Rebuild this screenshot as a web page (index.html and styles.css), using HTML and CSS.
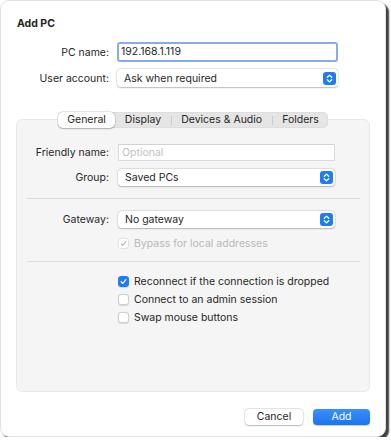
FILE: index.html
```html
<!DOCTYPE html>
<html>
<head>
<meta charset="utf-8">
<link rel="stylesheet" href="styles.css">
</head>
<body>
<div class="window">
  <div class="title">Add PC</div>
  <div class="form top">
    <span class="lbl">PC name:</span>
    <div class="field focus">192.168.1.119</div>
    <span class="lbl">User account:</span>
    <div class="select"><span>Ask when required</span><svg class="stepper" viewBox="0 0 13 13" width="13" height="13"><rect width="13" height="13" rx="3" fill="#1f7cf5"/><path d="M4.3 5.3 6.5 3.1 8.7 5.3M4.3 7.7 6.5 9.9 8.7 7.7" fill="none" stroke="#fff" stroke-width="1.3" stroke-linecap="round" stroke-linejoin="round"/></svg></div>
  </div>

  <div class="tabs">
    <div class="tab active">General</div>
    <div class="tab">Display</div>
    <div class="tsep"></div>
    <div class="tab">Devices &amp; Audio</div>
    <div class="tsep"></div>
    <div class="tab">Folders</div>
  </div>

  <div class="panel">
    <div class="form inner first">
      <span class="lbl">Friendly name:</span>
      <div class="field placeholder">Optional</div>
      <span class="lbl">Group:</span>
      <div class="select"><span>Saved PCs</span><svg class="stepper" viewBox="0 0 13 13" width="13" height="13"><rect width="13" height="13" rx="3" fill="#1f7cf5"/><path d="M4.3 5.3 6.5 3.1 8.7 5.3M4.3 7.7 6.5 9.9 8.7 7.7" fill="none" stroke="#fff" stroke-width="1.3" stroke-linecap="round" stroke-linejoin="round"/></svg></div>
    </div>
    <div class="sep sep1"></div>
    <div class="form inner gw">
      <span class="lbl">Gateway:</span>
      <div class="select"><span>No gateway</span><svg class="stepper" viewBox="0 0 13 13" width="13" height="13"><rect width="13" height="13" rx="3" fill="#1f7cf5"/><path d="M4.3 5.3 6.5 3.1 8.7 5.3M4.3 7.7 6.5 9.9 8.7 7.7" fill="none" stroke="#fff" stroke-width="1.3" stroke-linecap="round" stroke-linejoin="round"/></svg></div>
      <span></span>
      <div class="check disabled"><span class="box"><svg viewBox="0 0 11 11" width="11" height="11"><path d="M2.6 5.8 4.6 7.9 8.5 3.2" fill="none" stroke="#bdbdbd" stroke-width="1.4" stroke-linecap="round" stroke-linejoin="round"/></svg></span>Bypass for local addresses</div>
    </div>
    <div class="sep sep2"></div>
    <div class="checks">
      <div class="check"><span class="box on"><svg viewBox="0 0 11 11" width="11" height="11"><path d="M2.6 5.8 4.6 7.9 8.5 3.2" fill="none" stroke="#fff" stroke-width="1.5" stroke-linecap="round" stroke-linejoin="round"/></svg></span>Reconnect if the connection is dropped</div>
      <div class="check"><span class="box"></span>Connect to an admin session</div>
      <div class="check"><span class="box"></span>Swap mouse buttons</div>
    </div>
  </div>

  <div class="footer">
    <div class="btn">Cancel</div>
    <div class="btn primary">Add</div>
  </div>
</div>
</body>
</html>
```

FILE: styles.css
```css
html, body {
  margin: 0;
  padding: 0;
  background: #ffffff;
}

body {
  font-family: Inter, "Liberation Sans", sans-serif;
  font-size: 10.5px;
  line-height: 13px;
  color: #262626;
}

.window {
  width: 386px;
  height: 437px;
  box-sizing: border-box;
  background: #ffffff;
  border-radius: 9px;
  border: 1px solid #e2e2e2;
  box-shadow: 3px 3px 1.5px rgba(30, 30, 30, 0.85);
  padding: 16px 15px 0 15px;
  display: flex;
  flex-direction: column;
}

.title {
  font-weight: 700;
  font-size: 10.5px;
  line-height: 13px;
  padding-left: 1px;
  color: #1e1e1e;
}

.form {
  display: grid;
  align-items: center;
}

.form.top {
  margin-top: 12px;
  grid-template-columns: 93px 221px;
  column-gap: 8px;
  row-gap: 7px;
}

.lbl {
  text-align: right;
  white-space: nowrap;
}

.field {
  box-sizing: border-box;
  background: #ffffff;
  border: 1px solid #dcdcdc;
  border-top-color: #d2d2d2;
  height: 17px;
  line-height: 15px;
  padding-left: 3px;
}

.field.focus {
  height: 20px;
  line-height: 16px;
  border: 2px solid #86acee;
  border-radius: 3px;
  padding-left: 2px;
}

.field.placeholder {
  color: #c2c2c2;
}

.select {
  box-sizing: border-box;
  height: 18px;
  background: #ffffff;
  border-radius: 4px;
  box-shadow: 0 0 0 0.5px rgba(0, 0, 0, 0.12), 0 0.5px 1.5px rgba(0, 0, 0, 0.22);
  display: flex;
  align-items: center;
  justify-content: space-between;
  padding: 0 2px 0 7px;
}

.stepper {
  display: block;
}

.tabs {
  margin: 25px auto 0;
  display: flex;
  align-items: center;
  height: 16px;
  background: #e5e5e5;
  border-radius: 5px;
  box-shadow: inset 0 0 0 0.5px rgba(0, 0, 0, 0.06);
  position: relative;
  z-index: 1;
}

.tab {
  padding: 0 9.5px;
  height: 16px;
  line-height: 16px;
  white-space: nowrap;
  color: #262626;
}

.tab.active {
  background: #ffffff;
  border-radius: 5px;
  box-shadow: 0 0 0 0.5px rgba(0, 0, 0, 0.12), 0 0.5px 1.5px rgba(0, 0, 0, 0.25);
}

.tsep {
  width: 1px;
  height: 9px;
  background: #cbcbcb;
}

.panel {
  margin-top: -9px;
  height: 273px;
  box-sizing: border-box;
  background: #f5f5f5;
  border: 1px solid #e8e8e8;
  border-radius: 6px;
  padding-top: 24px;
}

.form.inner {
  grid-template-columns: 92px 217px;
  column-gap: 9px;
}

.form.first {
  row-gap: 8px;
}

.form.first .select {
  height: 17px;
}

.form.gw .select {
  height: 17px;
}

.form.gw {
  row-gap: 6px;
}

.sep {
  height: 1px;
  background: #dddddd;
  margin-left: 10px;
  margin-right: 9px;
}

.sep1 {
  margin-top: 12px;
  margin-bottom: 12px;
}

.sep2 {
  margin-top: 9px;
  margin-bottom: 10px;
}

.check {
  display: flex;
  align-items: center;
  height: 18px;
  white-space: nowrap;
}

.check.disabled {
  color: #b9b9b9;
}

.checks {
  padding-left: 101px;
}

.box {
  width: 11px;
  height: 11px;
  box-sizing: border-box;
  border-radius: 3px;
  background: #ffffff;
  border: 0.5px solid #cfcfcf;
  box-shadow: 0 0.5px 1px rgba(0, 0, 0, 0.12);
  margin-right: 5px;
  display: flex;
  align-items: center;
  justify-content: center;
  flex: none;
}

.box svg {
  display: block;
}

.check.disabled .box {
  border-color: #e2e2e2;
  box-shadow: none;
}

.box.on {
  background: #1f7cf5;
  border-color: #1f7cf5;
}

.footer {
  display: flex;
  justify-content: flex-end;
  gap: 10px;
  margin-top: 17px;
  padding-right: 0;
}

.btn {
  box-sizing: border-box;
  height: 16px;
  line-height: 16px;
  border-radius: 4px;
  text-align: center;
  background: #ffffff;
  box-shadow: 0 0 0 0.5px rgba(0, 0, 0, 0.14), 0 0.5px 1.5px rgba(0, 0, 0, 0.22);
  width: 58px;
  color: #262626;
}

.btn.primary {
  width: 57px;
  color: #ffffff;
  background: linear-gradient(#3b8ff9, #1a74f2);
  box-shadow: 0 0.5px 1px rgba(0, 0, 0, 0.2);
}
```
